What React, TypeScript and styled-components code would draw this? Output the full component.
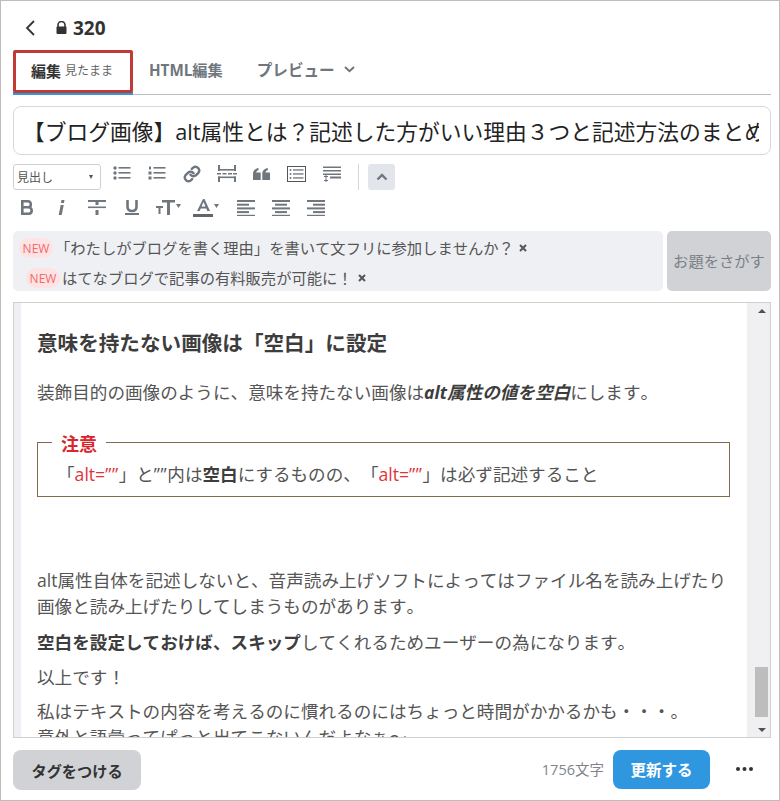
import React from "react";
import styled, { createGlobalStyle } from "styled-components";

const Global = createGlobalStyle`
  html, body { margin: 0; padding: 0; background: #fff; }
  *, *::before, *::after { box-sizing: border-box; }
  body { text-spacing-trim: space-all; font-kerning: none; }
`;

const font = `"Open Sans", "Noto Sans CJK JP", sans-serif`;
const ink = "#6f767d";

const Page = styled.div`
  width: 780px;
  height: 801px;
  border: 1px solid #bdbdbd;
  padding: 0 8px 0 12px;
  display: flex;
  flex-direction: column;
  font-family: ${font};
  color: #444;
  overflow: hidden;
`;

const Header = styled.header`
  height: 49px;
  display: flex;
  align-items: center;
  padding: 4px 0 0 11px;
  flex: none;
`;

const Back = styled.svg`
  width: 12px;
  height: 18px;
  margin-right: 20px;
`;

const Lock = styled.svg`
  width: 11px;
  height: 13px;
  margin-right: 6px;
`;

const Count = styled.span`
  font-size: 19px;
  font-weight: 700;
  color: #333;
`;

const Tabs = styled.nav`
  height: 45px;
  flex: none;
  display: flex;
  align-items: stretch;
  border-bottom: 1px solid #b8bcc4;
`;

const ActiveTab = styled.div`
  position: relative;
  width: 120px;
  height: 45px;
  border-bottom: 3px solid #2f96e0;
  display: flex;
  align-items: center;
  padding: 0 0 2px 18px;
  gap: 4px;
  &::after {
    content: "";
    position: absolute;
    left: 0;
    top: 0;
    width: 120px;
    height: 43px;
    border: 3px solid #c23a35;
    border-radius: 2px;
  }
`;

const TabStrong = styled.span`
  font-size: 15px;
  font-weight: 700;
  color: #333;
`;

const TabSub = styled.span`
  font-size: 12px;
  color: #666;
`;

const Tab = styled.div<{ $left: number; $size: number }>`
  display: flex;
  align-items: center;
  gap: 9px;
  margin-left: ${(p) => p.$left}px;
  padding-bottom: 6px;
  font-size: ${(p) => p.$size}px;
  font-weight: 700;
  color: ${ink};
`;

const TitleBox = styled.div`
  flex: none;
  margin-top: 11px;
  height: 49px;
  border: 1px solid #d8d8d8;
  border-radius: 8px;
  padding: 0 11px 0 9px;
  display: flex;
  align-items: center;
  font-size: 21.75px;
  color: #222;
`;

const TitleText = styled.span`
  display: block;
  width: 100%;
  white-space: nowrap;
  overflow: hidden;
`;

const Toolbar = styled.div`
  flex: none;
  height: 66px;
  margin-top: 9px;
  display: flex;
  flex-direction: column;
`;

const ToolRow = styled.div<{ $h: number }>`
  height: ${(p) => p.$h}px;
  display: flex;
  align-items: center;
`;

const Select = styled.div`
  width: 88px;
  height: 26px;
  border: 1px solid #ccd0d6;
  border-radius: 3px;
  font-size: 12px;
  color: #555;
  padding: 0 7px 0 3px;
  display: flex;
  align-items: center;
  justify-content: space-between;
  margin-right: 3px;
  &::after {
    content: "";
    border-left: 2.5px solid transparent;
    border-right: 2.5px solid transparent;
    border-top: 4px solid #555;
  }
`;

const Tool = styled.span<{ $w?: number }>`
  width: ${(p) => p.$w ?? 35}px;
  height: 26px;
  flex: none;
  display: flex;
  align-items: center;
  justify-content: center;
  color: ${ink};
  svg { display: block; }
`;

const TopTool = styled(Tool)`
  height: 19px;
  align-self: flex-start;
`;

const Divider = styled.span`
  width: 1px;
  height: 26px;
  background: #d5d7db;
  margin: 0 9px 0 9px;
`;

const Collapse = styled.span`
  width: 27px;
  height: 26px;
  background: #e2e5ec;
  border-radius: 3px;
  display: flex;
  align-items: center;
  justify-content: center;
`;

const AlignGroup = styled.div`
  display: flex;
  margin-left: 4px;
`;

const BoldSlot = styled(Tool)`
  margin-left: -4px;
`;

const Notices = styled.div`
  flex: none;
  margin-top: 1px;
  height: 60px;
  display: flex;
  gap: 4px;
`;

const NoticeList = styled.div`
  width: 650px;
  background: #eff0f4;
  border-radius: 5px;
  padding-top: 7px;
  display: flex;
  flex-direction: column;
  gap: 10px;
`;

const Notice = styled.div<{ $indent: number }>`
  height: 20px;
  display: flex;
  align-items: center;
  padding-left: ${(p) => p.$indent}px;
  padding-bottom: 3px;
  font-size: 15.3px;
  color: #555;
  white-space: nowrap;
`;

const NewBadge = styled.span`
  width: 34px;
  height: 20px;
  border-radius: 10px;
  background: #fde3e3;
  color: #f26a6a;
  font-size: 12px;
  line-height: 21px;
  text-align: center;
  margin-right: 2px;
  flex: none;
  align-self: flex-start;
`;

const Dismiss = styled.svg`
  width: 8px;
  height: 8px;
  margin-left: 5px;
  margin-top: 2px;
`;

const Topic = styled.div`
  width: 104px;
  background: #d0d2d6;
  border-radius: 5px;
  display: flex;
  align-items: center;
  justify-content: center;
  padding-bottom: 2px;
  font-size: 15.3px;
  color: #7b8086;
  white-space: nowrap;
`;

const Editor = styled.div`
  flex: none;
  margin-top: 11px;
  height: 436px;
  border: 1px solid #d0d0d0;
  display: flex;
  overflow: hidden;
`;

const Gutter = styled.div`
  width: 7px;
  background: #eff0f4;
  flex: none;
`;

const Doc = styled.article`
  flex: 1;
  padding: 26px 0 0 16px;
  font-size: 17.6px;
  line-height: 26px;
  color: #555;
  overflow: hidden;
  font-weight: 400;
`;

const Heading = styled.h3`
  margin: 0;
  font-size: 20.6px;
  line-height: 28px;
  font-weight: 700;
  color: #3d3d3d;
`;

const Para = styled.p<{ $top: number }>`
  margin: ${(p) => p.$top}px 0 0;
  white-space: nowrap;
`;

const Caution = styled.div`
  position: relative;
  margin-top: 37px;
  margin-right: 17px;
  height: 55px;
  border: 1px solid #806c4d;
  padding: 18px 0 0 19px;
  white-space: nowrap;
`;

const CautionLabel = styled.span`
  position: absolute;
  left: 14px;
  top: -11px;
  padding: 0 9px;
  background: #fff;
  color: #d9262c;
  font-size: 18px;
  font-weight: 700;
  line-height: 24px;
`;

const Red = styled.span`
  color: #e0343a;
`;

const QuoteMarks = styled.span`
  letter-spacing: 0.6px;
`;

const Strong = styled.strong`
  font-weight: 700;
  color: #3d3d3d;
`;

const StrongItalic = styled.strong`
  font-weight: 700;
  font-style: italic;
  color: #3d3d3d;
`;

const Scrollbar = styled.div`
  width: 23px;
  flex: none;
  background: #f0f0f2;
  position: relative;
`;

const Arrow = styled.span<{ $down?: boolean }>`
  position: absolute;
  right: 4px;
  ${(p) => (p.$down ? "bottom: 5px;" : "top: 6px;")}
  border-left: 4px solid transparent;
  border-right: 4px solid transparent;
  ${(p) => (p.$down ? "border-top: 4px solid #505050;" : "border-bottom: 4px solid #505050;")}
`;

const Thumb = styled.div`
  position: absolute;
  right: 2px;
  top: 364px;
  width: 13px;
  height: 50px;
  background: #bdbdbd;
`;

const Footer = styled.footer`
  flex: 1;
  display: flex;
  align-items: flex-start;
  padding-top: 12px;
`;

const TagButton = styled.div`
  width: 128px;
  height: 40px;
  background: #d0d2d6;
  border-radius: 8px;
  display: flex;
  align-items: center;
  justify-content: center;
  font-size: 15.2px;
  font-weight: 700;
  color: #333;
`;

const Chars = styled.span`
  margin-left: auto;
  margin-right: 9px;
  margin-top: 10px;
  font-size: 14.5px;
  line-height: 20px;
  color: #808489;
`;

const UpdateButton = styled.div`
  width: 97px;
  height: 39px;
  background: #2f96e0;
  border-radius: 8px;
  display: flex;
  align-items: center;
  justify-content: center;
  font-size: 15.5px;
  font-weight: 700;
  color: #fff;
`;

const More = styled.svg`
  width: 17px;
  height: 4px;
  margin: 17px 18px 0 26px;
`;

const CaretMark = styled.svg`
  margin-left: 1px;
  margin-bottom: 3px;
`;

const Ico = ({ w = 20, h = 18, children }: { w?: number; h?: number; children: React.ReactNode }) => (
  <svg width={w} height={h} viewBox={`0 0 ${w} ${h}`} fill="currentColor">{children}</svg>
);

const Bars = ({ rows }: { rows: [number, number][] }) => (
  <Ico w={18} h={17}>
    {rows.map(([x, w], i) => (
      <rect key={i} x={x} y={1 + i * 3.7} width={w} height={2} />
    ))}
  </Ico>
);

const Caret = () => (
  <CaretMark width="5" height="4" viewBox="0 0 5 4" fill="currentColor">
    <path d="M0 0h5L2.5 4z" />
  </CaretMark>
);

const Cross = () => (
  <Dismiss viewBox="0 0 8 8"><path d="M1 1l6 6M7 1 1 7" stroke="#555" strokeWidth="2" /></Dismiss>
);

export default function App() {
  return (
    <Page>
      <Global />
      <Header>
        <Back viewBox="0 0 12 18">
          <path d="M10 2 3 9l7 7" fill="none" stroke="#333" strokeWidth="1.8" />
        </Back>
        <Lock viewBox="0 0 11 13">
          <path d="M2 6V4a3.5 3.5 0 0 1 7 0v2" fill="none" stroke="#333" strokeWidth="1.6" />
          <rect x="0.5" y="5.5" width="10" height="7.5" rx="1" fill="#333" />
        </Lock>
        <Count>320</Count>
      </Header>
      <Tabs>
        <ActiveTab>
          <TabStrong>編集</TabStrong>
          <TabSub>見たまま</TabSub>
        </ActiveTab>
        <Tab $left={16} $size={15.2}>HTML編集</Tab>
        <Tab $left={34} $size={15.6}>
          プレビュー
          <svg width="11" height="7" viewBox="0 0 11 7">
            <path d="M1 1l4.500 4.200L10 1" fill="none" stroke={ink} strokeWidth="2" />
          </svg>
        </Tab>
      </Tabs>
      <TitleBox>
        <TitleText>【ブログ画像】alt属性とは？記述した方がいい理由３つと記述方法のまとめ</TitleText>
      </TitleBox>
      <Toolbar>
        <ToolRow $h={26}>
          <Select>見出し</Select>
          <TopTool>
            <Ico w={18} h={15}>
              <circle cx="2" cy="2" r="1.7" /><circle cx="2" cy="7" r="1.7" /><circle cx="2" cy="12" r="1.7" />
              <rect x="5.5" y="1" width="12" height="1.6" /><rect x="5.5" y="6" width="12" height="1.6" /><rect x="5.5" y="11" width="12" height="1.6" />
            </Ico>
          </TopTool>
          <TopTool>
            <Ico w={18} h={15}>
              <rect x="1" y="0.5" width="2" height="3" /><rect x="0.5" y="5.5" width="3" height="3" /><rect x="0.5" y="10.5" width="3" height="3" />
              <rect x="5.5" y="1" width="12" height="1.6" /><rect x="5.5" y="6" width="12" height="1.6" /><rect x="5.5" y="11" width="12" height="1.6" />
            </Ico>
          </TopTool>
          <TopTool>
            <svg width="18" height="18" viewBox="0 0 24 24" fill="none" stroke="currentColor" strokeWidth="3.2" strokeLinecap="round">
              <path d="M10 13a5 5 0 0 0 7.5.5l3-3a5 5 0 0 0-7-7l-1.700 1.700" />
              <path d="M14 11a5 5 0 0 0-7.500-.5l-3 3a5 5 0 0 0 7 7l1.700-1.700" />
            </svg>
          </TopTool>
          <TopTool>
            <Ico w={20} h={17}>
              <rect x="1" y="0" width="2" height="6" /><rect x="17" y="0" width="2" height="6" /><rect x="1" y="4" width="18" height="1.6" />
              <rect x="0" y="8" width="4" height="1.5" /><rect x="5.5" y="8" width="4" height="1.5" /><rect x="11" y="8" width="4" height="1.5" /><rect x="16" y="8" width="4" height="1.5" />
              <rect x="1" y="11.5" width="2" height="5.5" /><rect x="17" y="11.5" width="2" height="5.5" /><rect x="1" y="11.5" width="18" height="1.6" />
            </Ico>
          </TopTool>
          <TopTool>
            <Ico w={17} h={12}>
              <path d="M0 6C0 2.800 2.200.6 5.500 0v2.200C4 2.600 3.300 3.400 3.200 4.500H7.700V12H0zM9.300 6c0-3.200 2.200-5.400 5.500-6v2.200c-1.500.4-2.200 1.200-2.300 2.300H17V12H9.300z" />
            </Ico>
          </TopTool>
          <TopTool>
            <Ico w={19} h={16}>
              <rect x="0.5" y="0.500" width="18" height="15" fill="none" stroke="#555" />
              <circle cx="3.500" cy="4" r="1" /><circle cx="3.500" cy="8" r="1" /><circle cx="3.500" cy="12" r="1" />
              <rect x="6" y="3.300" width="10.500" height="1.300" /><rect x="6" y="7.300" width="10.500" height="1.300" /><rect x="6" y="11.300" width="10.500" height="1.300" />
            </Ico>
          </TopTool>
          <TopTool>
            <Ico w={18} h={16}>
              <rect x="0" y="0.500" width="18" height="1.500" /><rect x="0" y="4" width="18" height="1.500" /><rect x="0" y="7.500" width="18" height="1.500" />
              <rect x="7" y="10.500" width="11" height="2" /><rect x="1" y="10" width="4" height="1" /><rect x="2.500" y="9" width="1" height="4" /><rect x="1" y="14" width="4" height="1" /><rect x="2.500" y="13" width="1" height="3" />
            </Ico>
          </TopTool>
          <Divider />
          <Collapse>
            <svg width="12" height="8" viewBox="0 0 12 8">
              <path d="M1.500 6.500 6 2l4.500 4.500" fill="none" stroke={ink} strokeWidth="2.400" />
            </svg>
          </Collapse>
        </ToolRow>
        <ToolRow $h={35}>
          <BoldSlot>
            <svg width="14" height="15" viewBox="0 0 14 15" fill="none" stroke="currentColor" strokeWidth="2.600">
              <path d="M2.300 1.300v12.400h6.200c2 0 3.200-1.300 3.200-3.200s-1.400-3.200-3.400-3.200H2.300h5.700c1.800 0 2.800-1 2.800-2.900s-1-3.100-2.800-3.100z" />
            </svg>
          </BoldSlot>
          <Tool>
            <svg width="7" height="15" viewBox="0 0 7 15" fill="currentColor">
              <path d="M3.500 0h3l-.6 3h-3zM2.700 5h3L3.700 15h-3z" />
            </svg>
          </Tool>
          <Tool>
            <Ico w={18} h={15}>
              <rect x="0" y="0" width="18" height="2" /><rect x="7.500" y="2" width="3" height="3" />
              <rect x="0" y="6.500" width="18" height="1.600" /><rect x="7.500" y="10" width="3" height="5" />
            </Ico>
          </Tool>
          <Tool>
            <svg width="14" height="15" viewBox="0 0 14 15" fill="none" stroke="currentColor">
              <path d="M2.500 0v6.500c0 3 1.800 4.500 4.500 4.500s4.500-1.500 4.500-4.500V0" strokeWidth="2.600" />
              <path d="M0 14h14" strokeWidth="2" />
            </svg>
          </Tool>
          <Tool $w={39}>
            <svg width="19" height="15" viewBox="0 0 19 15" fill="currentColor">
              <path d="M0 6h7v2H4.500v6h-2V8H0zM6 0h13v2.500h-5V15h-3V2.500H6z" />
            </svg>
            <Caret />
          </Tool>
          <Tool $w={36}>
            <svg width="20" height="18" viewBox="0 0 20 18">
              <path d="M10 0h1.500L17 12h-2.700l-1-2.500H7.700l-1 2.500H4zM8.500 7.500h4L10.500 3z" fill="currentColor" fillRule="evenodd" />
              <rect x="0" y="15" width="20" height="3" fill="#5f666c" />
            </svg>
            <Caret />
          </Tool>
          <AlignGroup>
            <Tool>
              <Bars rows={[[0, 18], [0, 12], [0, 18], [0, 12], [0, 18]]} />
            </Tool>
            <Tool>
              <Bars rows={[[0, 18], [3, 12], [0, 18], [3, 12], [0, 18]]} />
            </Tool>
            <Tool>
              <Bars rows={[[0, 18], [6, 12], [0, 18], [6, 12], [0, 18]]} />
            </Tool>
          </AlignGroup>
        </ToolRow>
      </Toolbar>
      <Notices>
        <NoticeList>
          <Notice $indent={6}>
            <NewBadge>NEW</NewBadge>「わたしがブログを書く理由」を書いて文フリに参加しませんか？
            <Cross />
          </Notice>
          <Notice $indent={13}>
            <NewBadge>NEW</NewBadge>はてなブログで記事の有料販売が可能に！
            <Cross />
          </Notice>
        </NoticeList>
        <Topic>お題をさがす</Topic>
      </Notices>
      <Editor>
        <Gutter />
        <Doc>
          <Heading>意味を持たない画像は「空白」に設定</Heading>
          <Para $top={22}>
            装飾目的の画像のように、意味を持たない画像は<StrongItalic>alt属性の値を空白</StrongItalic>にします。
          </Para>
          <Caution>
            <CautionLabel>注意</CautionLabel>
            「<Red>alt=<QuoteMarks>””</QuoteMarks></Red>」と<QuoteMarks>””</QuoteMarks>内は<Strong>空白</Strong>にするものの、「<Red>alt=<QuoteMarks>””</QuoteMarks></Red>」は必ず記述すること
          </Caution>
          <Para $top={70}>alt属性自体を記述しないと、音声読み上げソフトによってはファイル名を読み上げたり</Para>
          <Para $top={0}>画像と読み上げたりしてしまうものがあります。</Para>
          <Para $top={10}>
            <Strong>空白を設定しておけば、スキップ</Strong>してくれるためユーザーの為になります。
          </Para>
          <Para $top={9}>以上です！</Para>
          <Para $top={8}>私はテキストの内容を考えるのに慣れるのにはちょっと時間がかかるかも・・・。</Para>
          <Para $top={0}>意外と語彙ってぱっと出てこないんだよなぁ～</Para>
        </Doc>
        <Scrollbar>
          <Arrow />
          <Thumb />
          <Arrow $down />
        </Scrollbar>
      </Editor>
      <Footer>
        <TagButton>タグをつける</TagButton>
        <Chars>1756文字</Chars>
        <UpdateButton>更新する</UpdateButton>
        <More viewBox="0 0 17 4">
          <circle cx="2" cy="2" r="2" fill="#333" /><circle cx="8.500" cy="2" r="2" fill="#333" /><circle cx="15" cy="2" r="2" fill="#333" />
        </More>
      </Footer>
    </Page>
  );
}
